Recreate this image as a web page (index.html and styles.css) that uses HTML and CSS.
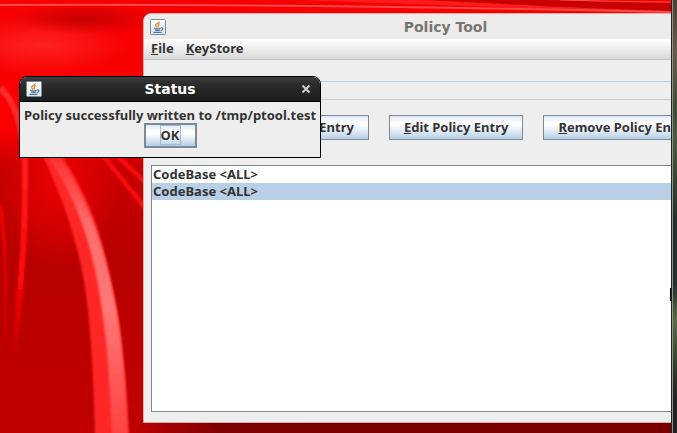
FILE: index.html
```
<!DOCTYPE html>
<html lang="en">
<head>
    <meta charset="UTF-8">
    <meta name="viewport" content="width=device-width, initial-scale=1.0">
    <title>Policy Tool</title>
    <link rel="stylesheet" href="styles.css">
</head>
<body>
    <svg class="defs" width="0" height="0" aria-hidden="true">
        <defs>
            <linearGradient id="cupBg" x1="0" y1="0" x2="0" y2="1">
                <stop offset="0" stop-color="#ffffff"/>
                <stop offset="1" stop-color="#dfe5ea"/>
            </linearGradient>
        </defs>
        <symbol id="java" viewBox="0 0 16 16">
            <rect x="0.5" y="0.5" width="15" height="15" rx="1" fill="url(#cupBg)" stroke="#6f8ba4"/>
            <path d="M9.200 2.500C9.600 4.200 5.200 4.600 5.600 6.400c.2.900 1 1.200 1.400 2M10.200 4.600C8.600 5 7.800 5.800 8.200 6.600c.3.600.4 1-.2 1.700" fill="none" stroke="#e58a2c" stroke-width="1.300"/>
            <path d="M4 9.300c1.500.6 5 .6 6.700 0M4.800 11c1.500.5 4 .5 5.300 0M3.500 13.300h8M11 9c2.600-.6 2.500 1.900-.2 2.400" fill="none" stroke="#4d759b" stroke-width="1.200"/>
        </symbol>
    </svg>

    <main class="desktop">
        <svg class="wallpaper" viewBox="0 0 671 433" preserveAspectRatio="xMinYMin slice" aria-hidden="true">
            <defs>
                <linearGradient id="base" x1="0" y1="0" x2="0" y2="1">
                    <stop offset="0" stop-color="#f60000"/>
                    <stop offset="0.3" stop-color="#fb0000"/>
                    <stop offset="0.38" stop-color="#c80000"/>
                    <stop offset="0.6" stop-color="#b80000"/>
                    <stop offset="1" stop-color="#c00000"/>
                </linearGradient>
                <linearGradient id="fade" gradientUnits="userSpaceOnUse" x1="0" y1="80" x2="0" y2="360">
                    <stop offset="0" stop-color="#ff3030"/>
                    <stop offset="0.7" stop-color="#ff0808"/>
                    <stop offset="1" stop-color="#ff0808" stop-opacity="0"/>
                </linearGradient>
                <linearGradient id="fadeDim" gradientUnits="userSpaceOnUse" x1="0" y1="200" x2="0" y2="350">
                    <stop offset="0" stop-color="#f00000"/>
                    <stop offset="1" stop-color="#f00000" stop-opacity="0"/>
                </linearGradient>
                <linearGradient id="shine" x1="0" y1="0" x2="0" y2="1">
                    <stop offset="0" stop-color="#ff3030"/>
                    <stop offset="0.25" stop-color="#ff6c6c"/>
                    <stop offset="0.55" stop-color="#ff7878"/>
                    <stop offset="0.8" stop-color="#ff5858"/>
                    <stop offset="1" stop-color="#ff4242"/>
                </linearGradient>
                <linearGradient id="floor" x1="0" y1="0" x2="1" y2="0">
                    <stop offset="0" stop-color="#b80000"/>
                    <stop offset="0.15" stop-color="#7e0000"/>
                    <stop offset="1" stop-color="#7a0000"/>
                </linearGradient>
                <radialGradient id="glow">
                    <stop offset="0" stop-color="#ec0000"/>
                    <stop offset="1" stop-color="#ec0000" stop-opacity="0"/>
                </radialGradient>
                <radialGradient id="shade">
                    <stop offset="0" stop-color="#c60000"/>
                    <stop offset="1" stop-color="#c60000" stop-opacity="0"/>
                </radialGradient>
                <radialGradient id="haze">
                    <stop offset="0" stop-color="#ff2222"/>
                    <stop offset="1" stop-color="#ff2222" stop-opacity="0"/>
                </radialGradient>
                <filter id="soft" x="-20%" y="-20%" width="140%" height="140%"><feGaussianBlur stdDeviation="1"/></filter>
            </defs>
            <rect width="671" height="433" fill="url(#base)"/>
            <ellipse cx="40" cy="45" rx="90" ry="30" fill="url(#haze)"/>
            <ellipse cx="85" cy="19" rx="75" ry="15" fill="url(#shade)"/>
            <path d="M0 0H300C400 4 540 8 671 14V7C560 5 480 2 420 0Z" fill="#ff1a1a"/>
            <path d="M430 0C520 5 600 9 671 11V3C620 2 580 1 540 0Z" fill="#c80000"/>
            <path d="M0 5C200 4 400 6 671 12" fill="none" stroke="#ff4848" stroke-width="2"/>
            <path d="M560 0C600 1 640 2 671 2" fill="none" stroke="#ff5050"/>
            <ellipse cx="60" cy="180" rx="60" ry="90" fill="url(#glow)"/>
            <path d="M0 88C14 100 22 122 25 160C26 230 22 270 14 360" fill="none" stroke="url(#fade)" stroke-width="6" filter="url(#soft)"/>
            <path d="M0 205C6 240 7 290 4 360" fill="none" stroke="url(#fadeDim)" stroke-width="4"/>
            <path d="M100 152L147 210M113 152L147 184" fill="none" stroke="#f80808" stroke-width="5" filter="url(#soft)"/>
            <path d="M40 150C62 195 82 250 88 310C92 350 94 390 95 436H129C127 390 123 335 115 298C105 250 96 205 58 150Z" fill="#ff2626" filter="url(#soft)"/>
            <path d="M47 155C78 200 94 250 102 310C108 350 110 390 112 436H128C126 390 122 335 114 298C104 250 92 205 58 155Z" fill="url(#shine)" filter="url(#soft)"/>
            <rect x="140" y="420" width="531" height="13" fill="url(#floor)"/>
        </svg>

        <section class="window">
            <header class="titlebar">
                <svg class="app-icon" aria-hidden="true"><use href="#java"/></svg>
                <h1 class="title">Policy Tool</h1>
                <span class="spacer"></span>
            </header>
            <nav class="menubar">
                <button class="menu"><u>F</u>ile</button>
                <button class="menu"><u>K</u>eyStore</button>
            </nav>
            <div class="file-row"></div>
            <div class="actions">
                <button class="btn"><u>A</u>dd Policy Entry</button>
                <button class="btn"><u>E</u>dit Policy Entry</button>
                <button class="btn"><u>R</u>emove Policy Entry</button>
            </div>
            <ul class="entries">
                <li class="entry">CodeBase &lt;ALL&gt;</li>
                <li class="entry selected">CodeBase &lt;ALL&gt;</li>
            </ul>
        </section>

        <section class="dialog" role="dialog" aria-labelledby="status-title">
            <header class="titlebar dark">
                <svg class="app-icon" aria-hidden="true"><use href="#java"/></svg>
                <h2 class="title" id="status-title">Status</h2>
                <button class="close" aria-label="Close">
                    <svg width="10" height="10" viewBox="0 0 10 10"><path d="M1.500 1.500L8.500 8.500M8.500 1.500L1.500 8.500" stroke="#d0d0d0" stroke-width="2"/></svg>
                </button>
            </header>
            <div class="dialog-body">
                <p class="message">Policy successfully written to /tmp/ptool.test</p>
                <button class="btn default"><span class="focus">OK</span></button>
            </div>
        </section>

        <div class="cursor"></div>
    </main>
    <aside class="edge"></aside>
</body>
</html>
```
FILE: styles.css
```
* {
    box-sizing: border-box;
}

body {
    margin: 0;
    height: 100vh;
    display: flex;
    overflow: hidden;
    color: #333;
    font: bold 13px/17px "Noto Sans", sans-serif;
}

button {
    font: inherit;
    color: inherit;
    margin: 0;
}

.defs {
    position: absolute;
}

.desktop {
    position: relative;
    flex: 1;
    overflow: hidden;
    background-color: #c00000;
}

.wallpaper {
    display: block;
    width: 100%;
    height: 100%;
}

/* main window, runs off the right side of the screen */
.window {
    position: absolute;
    top: 13px;
    left: 143px;
    right: -77px;
    bottom: 10px;
    display: flex;
    flex-direction: column;
    background-color: #eee;
    border: 1px solid #d8b0ac;
    border-radius: 8px 8px 0 0;
    padding-bottom: 10px;
}

.titlebar {
    display: flex;
    align-items: center;
    height: 25px;
    padding: 0 6px;
    background-color: #edeceb;
    border-radius: 7px 7px 0 0;
    color: #77756f;
}

.app-icon,
.spacer {
    width: 16px;
    height: 16px;
}

.title {
    flex: 1;
    margin: 0;
    text-align: center;
    font: bold 14px/20px "DejaVu Sans", sans-serif;
}

.menubar {
    display: flex;
    gap: 12px;
    height: 21px;
    padding: 0 7px 2px;
    background: linear-gradient(#fff, #dadada);
    border-bottom: 1px solid #c4c4c8;
}

.menu {
    padding: 0;
    border: none;
    background: none;
}

.file-row {
    height: 19px;
    margin-top: 21px;
    border-top: 1px solid #b8cfe5;
    border-bottom: 1px solid #b8cfe5;
}

.actions {
    display: flex;
    gap: 20px;
    padding: 15px 0 25px 90px;
}

.btn {
    height: 25px;
    padding: 0 14px;
    border: 1px solid #7a8a99;
    background: linear-gradient(#dde8f3, #fff 30%, #fff 40%, #b8cfe5);
    white-space: nowrap;
}

.entries {
    flex: 1;
    margin: 0 7px;
    padding: 0;
    list-style: none;
    background-color: #fff;
    border: 1px solid #7a8a99;
}

.entry {
    padding: 0 1px;
}

.entry.selected {
    background-color: #b8cfe5;
}

.dialog {
    position: absolute;
    top: 76px;
    left: 19px;
    background-color: #eee;
    border: 1px solid #000;
    border-radius: 8px 8px 0 0;
}

.titlebar.dark {
    color: #fff;
    background: linear-gradient(#3c3c3c, #2c2c2c 30%, #1c1c1c);
    border-bottom: 1px solid #000;
}

.close {
    display: flex;
    padding: 3px;
    border: none;
    background: none;
}

.dialog-body {
    display: flex;
    flex-direction: column;
    align-items: center;
    padding: 5px 4px 9px;
}

.message {
    margin: 0;
    line-height: 16px;
}

.btn.default {
    border-width: 2px;
    padding: 0 14px;
}

.focus {
    border: 1px solid #a3b8cc;
}

/* mouse pointer cut by the screen edge */
.cursor {
    position: absolute;
    right: 0;
    top: 288px;
    width: 1px;
    height: 13px;
    background-color: #000;
}

.edge {
    width: 6px;
    border-left: 1px solid #222;
    box-shadow: inset 1px 0 #8c9288;
    background: linear-gradient(#4a4034, #6a5c4c 12%, #3f4c36 25%, #4c5a3c 32%, #26302a 50%, #26302a 66%, #5c6c48 74%, #34402c 84%, #222 92%);
}
```
